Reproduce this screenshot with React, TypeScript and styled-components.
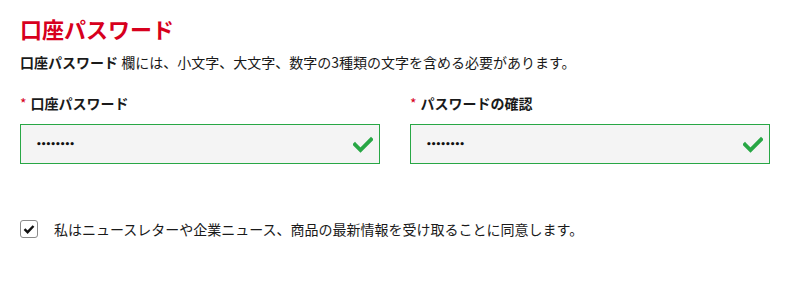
import React, { useState } from "react";
import styled, { createGlobalStyle } from "styled-components";

const GlobalStyle = createGlobalStyle`
  html, body {
    margin: 0;
    padding: 0;
    background: #ffffff;
  }
  body {
    font-family: "Noto Sans CJK JP", "Noto Sans", sans-serif;
    color: #1a1a1a;
  }
`;

const CheckIcon: React.FC<{ size?: number; color?: string }> = ({ size = 20, color = "#28a745" }) => (
  <svg width={size} height={size} viewBox="0 0 20 20">
    <path d="M2 10.5 L7.5 16 L18 5.5" fill="none" stroke={color} strokeWidth={3.8} strokeLinecap="square" />
  </svg>
);

type FieldProps = {
  label: string;
  value: string;
};

const PasswordField: React.FC<FieldProps> = ({ label, value }) => (
  <Field>
    <Label>
      <Required>*</Required>
      {label}
    </Label>
    <InputBox>
      <Input type="password" value={value} readOnly />
      <Valid>
        <CheckIcon />
      </Valid>
    </InputBox>
  </Field>
);

export default function App() {
  const [agree, setAgree] = useState(true);

  return (
    <>
      <GlobalStyle />
      <Page>
        <Title>口座パスワード</Title>
        <Description>
          <strong>口座パスワード</strong> 欄には、小文字、大文字、数字の3種類の文字を含める必要があります。
        </Description>
        <Fields>
          <PasswordField label="口座パスワード" value="12345678" />
          <PasswordField label="パスワードの確認" value="12345678" />
        </Fields>
        <Consent>
          <Box type="button" onClick={() => setAgree(!agree)}>
            {agree && (
              <svg width="12" height="12" viewBox="0 0 12 12">
                <path d="M1.5 6.2 L4.6 9.2 L10.5 3" fill="none" stroke="#111" strokeWidth={2.4} />
              </svg>
            )}
          </Box>
          <ConsentText>私はニュースレターや企業ニュース、商品の最新情報を受け取ることに同意します。</ConsentText>
        </Consent>
      </Page>
    </>
  );
}

const Page = styled.div`
  padding: 13px 20px 0 20px;
  width: 792px;
  box-sizing: border-box;
`;

const Title = styled.h1`
  margin: 0;
  font-size: 22px;
  line-height: 30px;
  font-weight: 700;
  color: #d7001d;
`;

const Description = styled.p`
  margin: 8px 0 0 0;
  font-size: 14px;
  line-height: 22px;
  color: #1a1a1a;

  strong {
    font-weight: 700;
  }
`;

const Fields = styled.div`
  display: grid;
  grid-template-columns: 360px 360px;
  column-gap: 30px;
  margin-top: 19px;
`;

const Field = styled.div`
  display: flex;
  flex-direction: column;
`;

const Label = styled.label`
  font-size: 14px;
  line-height: 22px;
  font-weight: 700;
  color: #1a1a1a;
  margin-bottom: 10px;
`;

const Required = styled.span`
  color: #d7001d;
  font-weight: 400;
  margin-right: 4px;
`;

const InputBox = styled.div`
  display: flex;
  align-items: center;
  height: 40px;
  box-sizing: border-box;
  border: 1px solid #28a745;
  background: #f4f4f4;
`;

const Input = styled.input`
  flex: 1;
  border: none;
  background: transparent;
  outline: none;
  height: 100%;
  padding: 0 0 0 15px;
  font-family: "DejaVu Sans", sans-serif;
  font-size: 9px;
  font-weight: 700;
  letter-spacing: -1px;
  color: #111;
`;

const Valid = styled.span`
  display: flex;
  align-items: center;
  padding-right: 6px;
`;

const Consent = styled.div`
  display: flex;
  align-items: center;
  margin-top: 54px;
`;

const Box = styled.button`
  width: 18px;
  height: 18px;
  padding: 0;
  box-sizing: border-box;
  border: 1px solid #8a8a8a;
  border-radius: 3px;
  background: #fff;
  display: flex;
  align-items: center;
  justify-content: center;
  cursor: pointer;
`;

const ConsentText = styled.span`
  margin-left: 16px;
  font-size: 14px;
  line-height: 22px;
  color: #1a1a1a;
`;
